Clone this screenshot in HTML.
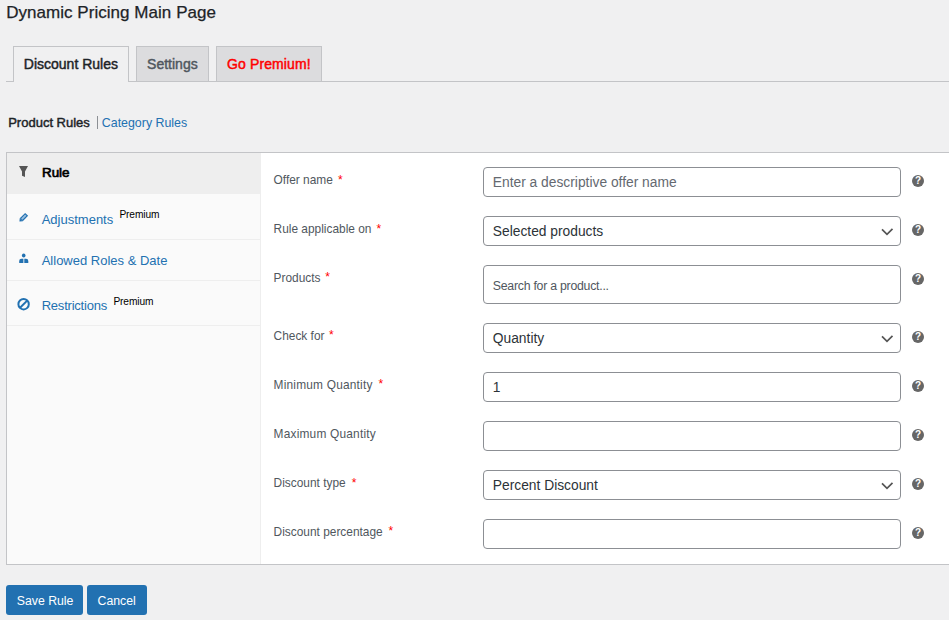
<!DOCTYPE html>
<html><head><meta charset="utf-8"><title>Dynamic Pricing Main Page</title>
<style>
html,body{margin:0;padding:0}
body{width:949px;height:620px;overflow:hidden;position:relative;background:#f0f0f1;font-family:"Liberation Sans",sans-serif}
.t{position:absolute;white-space:nowrap;line-height:1}
.abs{position:absolute}
.tab{position:absolute;border:1px solid #c3c4c7;border-bottom:none}
.panel{position:absolute;left:6px;top:152px;width:943px;height:411px;border:1px solid #c3c4c7;border-right:none;background:#fff}
.box{position:absolute;left:483px;width:416px;border:1px solid #8c8f94;border-radius:4px;background:#fff}
.help{position:absolute;left:912px;width:12px;height:12px;border-radius:50%;background:#666;color:#fff;font-size:10px;font-weight:700;line-height:12px;text-align:center}
.btn{position:absolute;top:585px;height:30px;background:#2271b1;border-radius:3px}
</style></head><body>
<div class="t" style="left:6.20px;top:3.81px;font-size:17px;color:#1d2327;font-weight:400;letter-spacing:0.04px;-webkit-text-stroke:0.25px #1d2327;">Dynamic Pricing Main Page</div>
<div class="abs" style="left:6px;top:81px;width:943px;height:1px;background:#c3c4c7"></div>
<div class="tab" style="left:13px;top:46px;width:114px;height:35px;background:#f0f0f1"></div>
<div class="tab" style="left:136px;top:46px;width:71px;height:34px;background:#dcdcde"></div>
<div class="tab" style="left:216px;top:46px;width:104px;height:34px;background:#dcdcde"></div>
<div class="t" style="left:23.80px;top:57.15px;font-size:14px;color:#1d2327;font-weight:400;-webkit-text-stroke:0.45px currentColor;">Discount Rules</div>
<div class="t" style="left:147.10px;top:57.15px;font-size:14px;color:#50575e;font-weight:400;-webkit-text-stroke:0.45px currentColor;">Settings</div>
<div class="t" style="left:227.10px;top:57.15px;font-size:14px;color:#ff0000;font-weight:400;letter-spacing:0.1px;-webkit-text-stroke:0.45px currentColor;">Go Premium!</div>
<div class="t" style="left:8.20px;top:116.10px;font-size:13px;color:#1d2327;font-weight:400;-webkit-text-stroke:0.45px currentColor;">Product Rules</div>
<div class="abs" style="left:97px;top:116px;width:1px;height:13px;background:#8c8f94"></div>
<div class="t" style="left:101.80px;top:116.60px;font-size:12.4px;color:#2271b1;font-weight:400;">Category Rules</div>
<div class="panel"></div>
<div class="abs" style="left:7px;top:153px;width:254px;height:411px;background:#fafafa"></div>
<div class="abs" style="left:260px;top:153px;width:1px;height:411px;background:#eee"></div>
<div class="abs" style="left:261px;top:153px;width:688px;height:411px;background:#fff"></div>
<div class="abs" style="left:7px;top:153px;width:254px;height:41px;background:#eee"></div>
<div class="abs" style="left:7px;top:239px;width:253px;height:1px;background:#eee"></div>
<div class="abs" style="left:7px;top:280px;width:253px;height:1px;background:#eee"></div>
<div class="abs" style="left:7px;top:325px;width:253px;height:1px;background:#eee"></div>
<div class="t" style="left:42.00px;top:166.16px;font-size:13.4px;color:#000;font-weight:400;-webkit-text-stroke:0.7px #000;">Rule</div>
<div class="t" style="left:41.70px;top:213.00px;font-size:13px;color:#2271b1;font-weight:400;">Adjustments</div>
<div class="t" style="left:119.40px;top:210.37px;font-size:10.2px;color:#000;font-weight:400;letter-spacing:-0.12px;">Premium</div>
<div class="t" style="left:41.70px;top:254.00px;font-size:13px;color:#2271b1;font-weight:400;">Allowed Roles &amp; Date</div>
<div class="t" style="left:41.70px;top:299.00px;font-size:13px;color:#2271b1;font-weight:400;letter-spacing:-0.22px;">Restrictions</div>
<div class="t" style="left:113.40px;top:297.17px;font-size:10.2px;color:#000;font-weight:400;letter-spacing:-0.12px;">Premium</div>
<svg class="abs" style="left:0;top:0" width="40" height="330" viewBox="0 0 40 330">
<path d="M19 166 H28 L25 171.5 V177 L22 175.7 V171.5 Z" fill="#555"/>
<g transform="translate(23.1 217.9) rotate(-45)"><rect x="-2.6" y="-2.1" width="7.6" height="4.2" fill="#2271b1"/><path d="M-2.6 -2.1 L-5.2 0 L-2.6 2.1 Z" fill="#2271b1"/><rect x="-1.8" y="-0.9" width="5.6" height="1.8" fill="#9cc0e0"/></g>
<ellipse cx="23.7" cy="255.5" rx="1.8" ry="2.1" fill="#2271b1"/>
<path d="M19.2 263 V261 Q19.2 258.7 21.5 258.7 H23.4 V263 Z M24.3 263 V258.7 H26 Q28.3 258.7 28.3 261 V263 Z" fill="#2271b1"/>
<circle cx="23.6" cy="304.2" r="5.2" fill="none" stroke="#2271b1" stroke-width="2"/>
<path d="M19.8 308 L27.4 300.4" stroke="#2271b1" stroke-width="2"/>
</svg>
<div class="t" style="left:273.60px;top:175.43px;font-size:11.9px;color:#50575e;font-weight:400;">Offer name</div>
<div class="t" style="left:338.10px;top:173.84px;font-size:12px;color:#f00;font-weight:400;">*</div>
<div class="box" style="top:167px;height:28px"></div>
<div class="t" style="left:492.80px;top:176.32px;font-size:13.8px;color:#646970;font-weight:400;">Enter a descriptive offer name</div>
<div class="help" style="top:175.3px">?</div>
<div class="t" style="left:273.60px;top:224.33px;font-size:11.9px;color:#50575e;font-weight:400;">Rule applicable on</div>
<div class="t" style="left:376.60px;top:222.74px;font-size:12px;color:#f00;font-weight:400;">*</div>
<div class="box" style="top:216px;height:28px"></div>
<div class="t" style="left:492.80px;top:225.22px;font-size:13.8px;color:#2c3338;font-weight:400;">Selected products</div>
<svg class="abs" style="left:880px;top:216px" width="14" height="30" viewBox="0 0 14 30"><path d="M2 13.3 L7 18.3 L12.5 12.8" fill="none" stroke="#555" stroke-width="1.7"/></svg>
<div class="help" style="top:224.2px">?</div>
<div class="t" style="left:273.60px;top:272.93px;font-size:11.9px;color:#50575e;font-weight:400;">Products</div>
<div class="t" style="left:325.20px;top:271.34px;font-size:12px;color:#f00;font-weight:400;">*</div>
<div class="box" style="top:265px;height:37px"></div>
<div class="t" style="left:492.80px;top:279.59px;font-size:12.3px;color:#50575e;font-weight:400;letter-spacing:-0.25px;">Search for a product...</div>
<div class="help" style="top:272.8px">?</div>
<div class="t" style="left:273.60px;top:331.03px;font-size:11.9px;color:#50575e;font-weight:400;">Check for</div>
<div class="t" style="left:329.00px;top:329.44px;font-size:12px;color:#f00;font-weight:400;">*</div>
<div class="box" style="top:323px;height:28px"></div>
<div class="t" style="left:492.80px;top:332.32px;font-size:13.8px;color:#2c3338;font-weight:400;">Quantity</div>
<svg class="abs" style="left:880px;top:323px" width="14" height="30" viewBox="0 0 14 30"><path d="M2 13.3 L7 18.3 L12.5 12.8" fill="none" stroke="#555" stroke-width="1.7"/></svg>
<div class="help" style="top:330.9px">?</div>
<div class="t" style="left:273.60px;top:379.93px;font-size:11.9px;color:#50575e;font-weight:400;letter-spacing:0.2px;">Minimum Quantity</div>
<div class="t" style="left:378.60px;top:378.34px;font-size:12px;color:#f00;font-weight:400;">*</div>
<div class="box" style="top:372px;height:28px"></div>
<div class="t" style="left:492.80px;top:380.62px;font-size:13.8px;color:#2c3338;font-weight:400;">1</div>
<div class="help" style="top:379.8px">?</div>
<div class="t" style="left:273.60px;top:428.83px;font-size:11.9px;color:#50575e;font-weight:400;letter-spacing:0.2px;">Maximum Quantity</div>
<div class="box" style="top:421px;height:28px"></div>
<div class="help" style="top:428.7px">?</div>
<div class="t" style="left:273.60px;top:478.23px;font-size:11.9px;color:#50575e;font-weight:400;">Discount type</div>
<div class="t" style="left:351.80px;top:476.64px;font-size:12px;color:#f00;font-weight:400;">*</div>
<div class="box" style="top:470px;height:28px"></div>
<div class="t" style="left:492.80px;top:478.62px;font-size:13.8px;color:#2c3338;font-weight:400;">Percent Discount</div>
<svg class="abs" style="left:880px;top:470px" width="14" height="30" viewBox="0 0 14 30"><path d="M2 13.3 L7 18.3 L12.5 12.8" fill="none" stroke="#555" stroke-width="1.7"/></svg>
<div class="help" style="top:478.1px">?</div>
<div class="t" style="left:273.60px;top:526.83px;font-size:11.9px;color:#50575e;font-weight:400;">Discount percentage</div>
<div class="t" style="left:388.60px;top:525.24px;font-size:12px;color:#f00;font-weight:400;">*</div>
<div class="box" style="top:519px;height:28px"></div>
<div class="help" style="top:526.7px">?</div>
<div class="btn" style="left:6px;width:77px"></div>
<div class="btn" style="left:87px;width:60px"></div>
<div class="t" style="left:16.70px;top:594.79px;font-size:12.3px;color:#fff;font-weight:400;">Save Rule</div>
<div class="t" style="left:97.50px;top:594.79px;font-size:12.3px;color:#fff;font-weight:400;">Cancel</div>
</body></html>
